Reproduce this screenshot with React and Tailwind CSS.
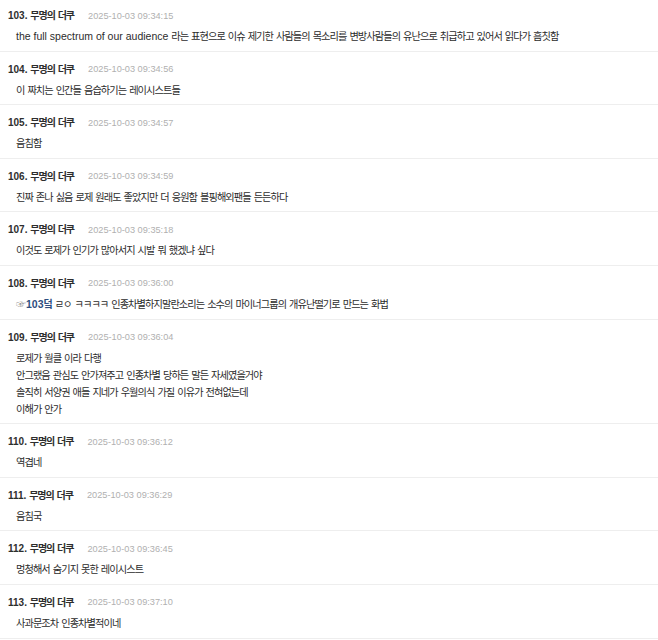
import React from "react";

const HANGUL = /([\u3131-\u318E\uAC00-\uD7A3]+)/;

function Mixed({ text, bold }) {
  const parts = text.split(HANGUL);
  return (
    <>
      {parts.map((p, i) =>
        p === "" ? null : HANGUL.test(p) ? (
          <span
            key={i}
            className={
              bold
                ? "text-[10px] tracking-[-1px] font-bold"
                : "text-[10.2px] tracking-[-0.92px]"
            }
            style={{ fontFamily: '"Noto Sans CJK KR", sans-serif' }}
          >
            {p}
          </span>
        ) : (
          <span key={i}>{p}</span>
        )
      )}
    </>
  );
}

const rows = [
  { n: 103, t: "09:34:15", lines: ["the full spectrum of our audience 라는 표현으로 이슈 제기한 사람들의 목소리를 변방사람들의 유난으로 취급하고 있어서 읽다가 흠칫함"] },
  { n: 104, t: "09:34:56", lines: ["이 짜치는 인간들 음습하기는 레이시스트들"] },
  { n: 105, t: "09:34:57", lines: ["음침함"] },
  { n: 106, t: "09:34:59", lines: ["진짜 존나 싫음 로제 원래도 좋았지만 더 응원함 블핑해외팬들 든든하다"] },
  { n: 107, t: "09:35:18", lines: ["이것도 로제가 인기가 많아서지 시발 뭐 했겠냐 싶다"] },
  { n: 108, t: "09:36:00", quote: true, lines: [" ㄹㅇ ㅋㅋㅋㅋ 인종차별하지말란소리는 소수의 마이너그룹의 개유난떨기로 만드는 화법"] },
  { n: 109, t: "09:36:04", lines: ["로제가 월클 이라 다행", "안그랬음 관심도 안가져주고 인종차별 당하든 말든 자세였을거야", "솔직히 서양권 애들 지네가 우월의식 가질 이유가 전혀없는데", "이해가 안가"] },
  { n: 110, t: "09:36:12", lines: ["역겹네"] },
  { n: 111, t: "09:36:29", lines: ["음침국"] },
  { n: 112, t: "09:36:45", lines: ["멍청해서 숨기지 못한 레이시스트"] },
  { n: 113, t: "09:37:10", lines: ["사과문조차 인종차별적이네"] },
];

export default function App() {
  return (
    <div
      className="w-[658px] h-[640px] overflow-hidden bg-white text-[#2c2c2c]"
      style={{ fontFamily: '"Liberation Sans", "Noto Sans CJK KR", sans-serif' }}
    >
      <div className="-mt-[2px]">
        {rows.map((r) => (
          <div
            key={r.n}
            className="border-b border-[#eeeeee] px-2 pt-[9.5px] pb-[6.6px]"
          >
            <div className="flex items-center h-4 leading-4">
              <span className="text-[10px] font-bold text-[#2e2e2e]">
                {r.n}. <Mixed text="무명의 더쿠" bold />
              </span>
              <span className="ml-[14px] text-[9.2px] text-[#b0b0b0]">
                2025-10-03 {r.t}
              </span>
            </div>
            <div className="mt-[3.5px] pl-2 text-[10.5px] leading-[17px] text-[#2c2c2c]">
              {r.lines.map((l, i) => (
                <div key={i} className="h-[17px] whitespace-nowrap">
                  {r.quote && (
                    <>
                      <span
                        className="text-[10px] text-[#8a8a8a]"
                        style={{ fontFamily: '"Noto Sans CJK KR", "DejaVu Sans", sans-serif' }}
                      >
                        ☞
                      </span>
                      <span className="font-bold text-[#2d4e80]">
                        103<Mixed text="덬" bold />
                      </span>
                    </>
                  )}
                  <Mixed text={l} />
                </div>
              ))}
            </div>
          </div>
        ))}
      </div>
    </div>
  );
}
